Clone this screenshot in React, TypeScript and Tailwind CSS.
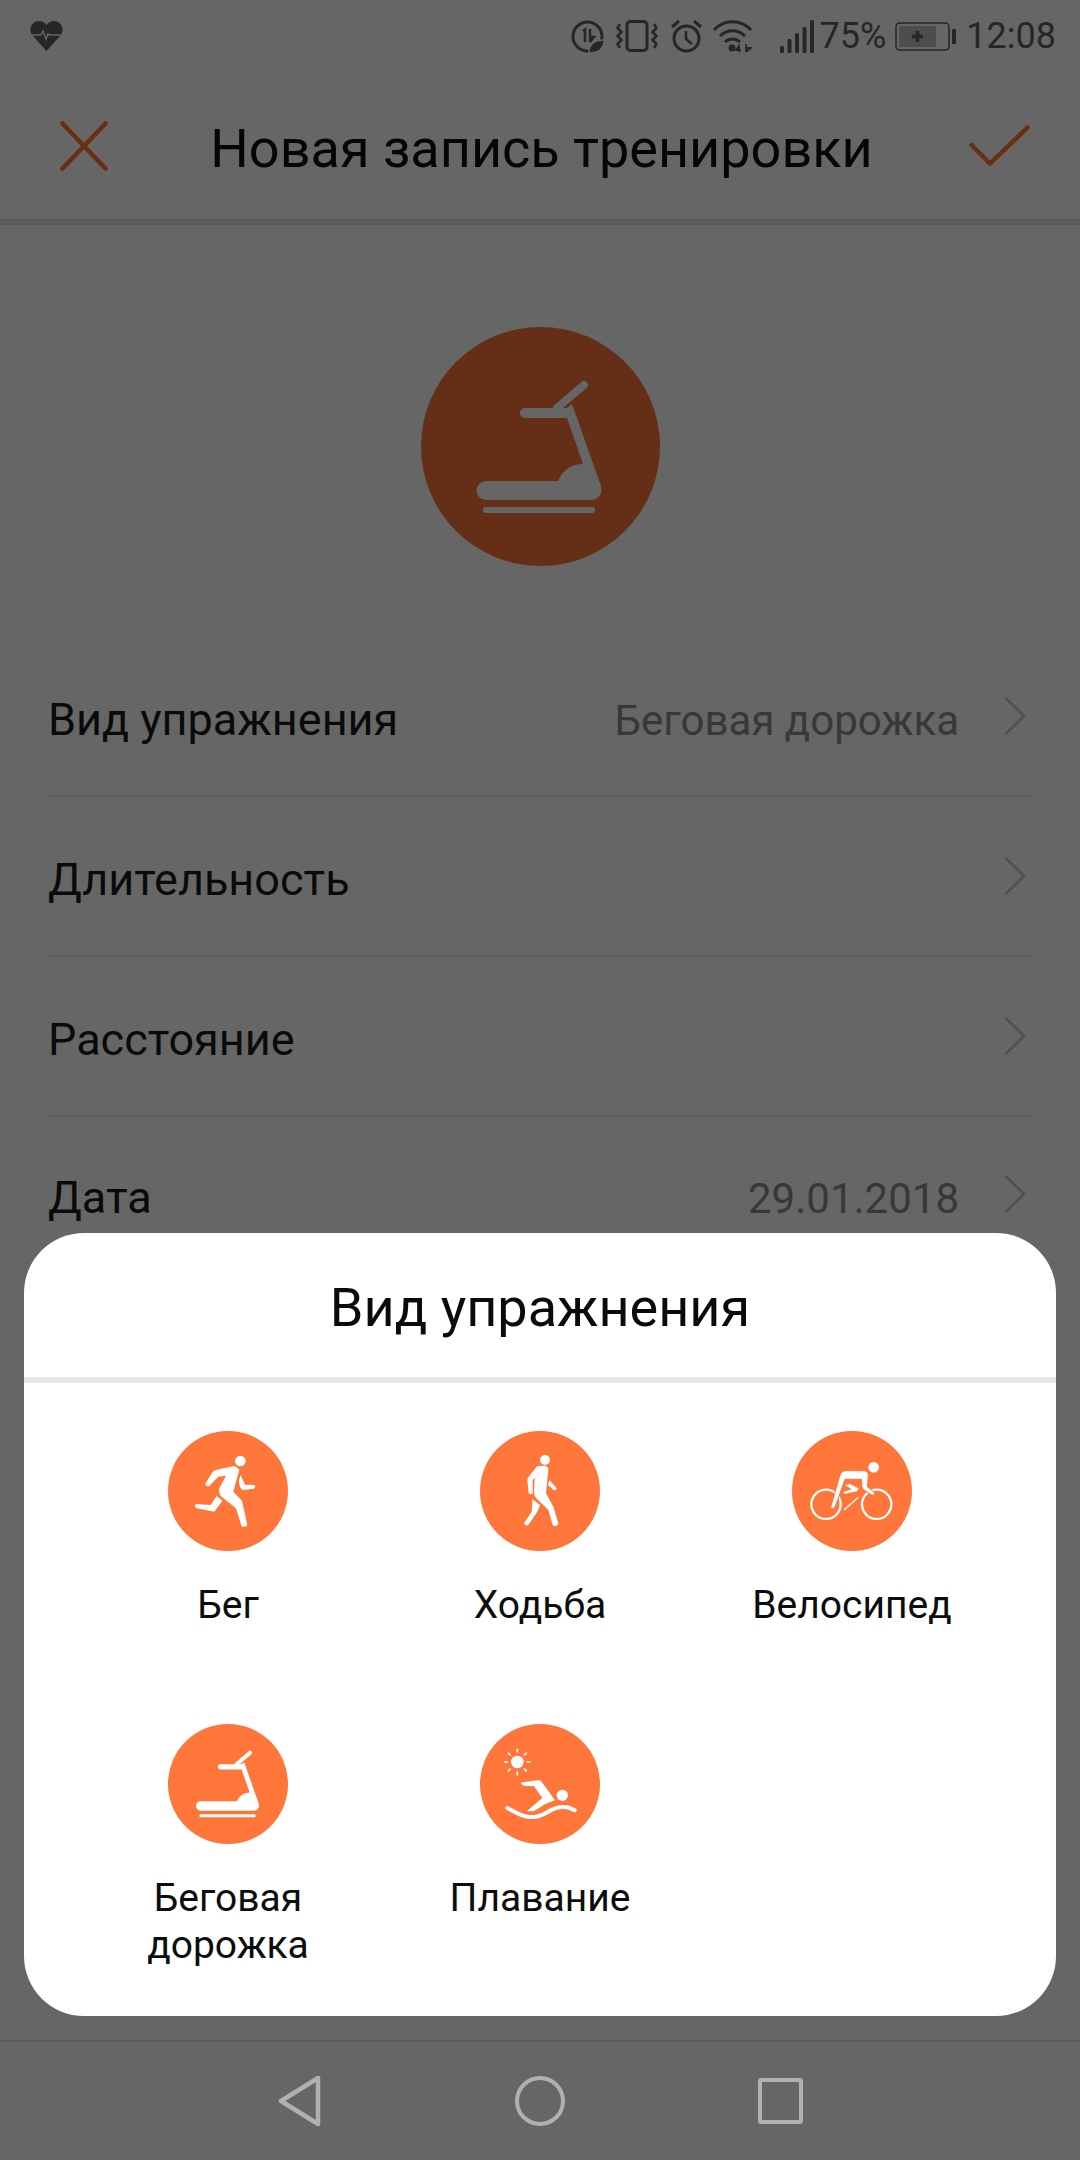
import React from "react";

const ORANGE = "#fe763a";

function Treadmill({ fill, size }: { fill: string; size: number }) {
  return (
    <svg width={size} height={size} viewBox="0 0 238 238">
      <path d="M104 85H146" stroke={fill} strokeWidth="10" strokeLinecap="round" fill="none" />
      <path d="M136 80L163 57" stroke={fill} strokeWidth="8" strokeLinecap="round" fill="none" />
      <path
        d="M146 90L162 136C150 136 141 143 137 153L65 153A9.5 9.5 0 0 0 65 172L170 172C178 172 182 165 180 158L151 76L143 82Z"
        fill={fill}
      />
      <path d="M65 182H171" stroke={fill} strokeWidth="6" strokeLinecap="round" fill="none" />
    </svg>
  );
}

function Runner() {
  return (
    <svg width="120" height="120" viewBox="54 63 360 360" fill="#fff">
      <circle cx="271" cy="153" r="16" />
      <path d="M165 222L188 186Q192 180 200 179L250 169Q262 170 268 180L262 200L250 245L276 272L292 345Q290 352 280 350L275 350L258 295L212 258Q205 248 208 235L228 197L205 200L178 228Q168 230 165 222Z" />
      <path d="M200 258L217 272L195 303Q190 306 185 304L140 295Q132 290 137 282L182 285Z" />
      <path d="M272 195L285 224L314 225Q318 232 312 236L280 240Q272 238 270 230L266 215Z" />
    </svg>
  );
}

function Walker() {
  return (
    <svg width="120" height="120" viewBox="60 63 360 360" fill="#fff">
      <circle cx="255" cy="150" r="15" />
      <path d="M232 168L256 167Q265 170 265 180L258 250L280 290L295 340Q293 350 283 348L278 345L265 300L232 268Q222 258 222 245L224 205L238 190L218 210L218 250Q212 256 206 250L202 210Q202 204 206 200Z" />
      <path d="M218 268L240 285L232 305L205 345Q197 350 192 340L215 305Z" />
      <path d="M268 210L290 235Q288 243 282 241L264 225Z" />
    </svg>
  );
}

function Bike() {
  return (
    <svg width="120" height="120" viewBox="996 63 360 360" fill="#fff">
      <circle cx="1241" cy="172" r="16" />
      <circle cx="1098" cy="283" r="44" fill="none" stroke="#fff" strokeWidth="7" />
      <circle cx="1250" cy="283" r="44" fill="none" stroke="#fff" strokeWidth="7" />
      <path d="M1140 195Q1145 182 1160 182L1215 182Q1225 185 1225 195L1222 230L1245 248Q1243 258 1235 255L1212 240Q1205 235 1205 225L1205 208L1155 208L1125 292Q1118 300 1112 292Z" stroke={ORANGE} strokeWidth="3" />
      <path d="M1155 225L1170 222L1195 235Q1193 248 1183 245L1155 252L1150 246L1175 238Z" />
      <path d="M1152 300L1195 262" stroke="#fff" strokeWidth="4" />
    </svg>
  );
}

function Swimmer() {
  const rays = [0, 45, 90, 135, 180, 225, 270, 315];
  return (
    <svg width="120" height="120" viewBox="988 43 360 360" fill="#fff">
      <circle cx="1100" cy="157" r="19" />
      {rays.map((a) => (
        <path
          key={a}
          d="M1100 127V119"
          stroke="#fff"
          strokeWidth="5"
          strokeLinecap="round"
          transform={`rotate(${a} 1100 157)`}
        />
      ))}
      <circle cx="1235" cy="257" r="17" />
      <path d="M1112 222Q1108 218 1116 218L1160 212Q1168 211 1173 216L1213 272Q1195 278 1180 285L1150 305L1128 305L1175 265L1150 230L1118 228Z" />
      <path
        d="M1070 295C1100 310 1120 325 1150 322C1190 318 1200 290 1240 292C1255 292 1265 298 1272 302"
        fill="none"
        stroke="#fff"
        strokeWidth="12"
        strokeLinecap="round"
      />
    </svg>
  );
}

function Chevron() {
  return (
    <svg width="22" height="38" viewBox="0 0 22 38" fill="none" className="mr-[5px] ml-[45px]">
      <path d="M1.500 1L20 19L1.500 37" stroke="#505050" strokeWidth="2.500" />
    </svg>
  );
}

function Row({ label, value }: { label: string; value?: string }) {
  return (
    <div className="flex h-[160px] items-center border-b-2 border-[#5e5e5e] last:h-[154px] last:border-b-0">
      <span className="-ml-px flex-1 pt-[8px] text-[45px] text-[#0a0a0a]">{label}</span>
      {value && <span className="pt-[8px] text-[42px] text-[#383838]">{value}</span>}
      <Chevron />
    </div>
  );
}

function Choice({ label, children }: { label: string; children: React.ReactNode }) {
  return (
    <div className="flex h-[293px] flex-col items-center">
      <div className="flex h-[120px] w-[120px] items-center justify-center rounded-full bg-[#fe763a]">{children}</div>
      <div className="mt-[31px] w-[230px] text-center text-[39px] leading-[47px] whitespace-pre-line text-[#0d0d0d]">{label}</div>
    </div>
  );
}

export default function App() {
  return (
    <div
      className="relative flex h-[2160px] w-[1080px] flex-col overflow-hidden bg-[#666666]"
      style={{ fontFamily: "Roboto, 'Noto Sans', sans-serif" }}
    >
      {/* status bar */}
      <div className="flex h-[72px] items-center pr-[24px] pl-[30px] text-[#262626]">
        <svg width="33" height="30" viewBox="0 0 33 30">
          <path d="M16.5 30L2 14C-2 8 2 0 9 0C12.500 0 15 2 16.500 4C18 2 20.500 0 24 0C31 0 35 8 31 14Z" fill="#262626" />
          <path d="M1 14H11L13 10L16 18L18 13L19.500 14H32" stroke="#666" strokeWidth="1.500" fill="none" />
        </svg>
        <div className="flex-1" />
        <svg width="33" height="33" viewBox="0 0 33 33" fill="none">
          <circle cx="16.500" cy="16.500" r="14.500" stroke="#262626" strokeWidth="3" />
          <path d="M12 11L14 9.500V22M19 9V22M19 22L23 17H19" stroke="#262626" strokeWidth="2.500" />
          <path d="M18 33C18 24 24 20 33 20C33 28 28 33 18 33Z" fill="#262626" stroke="#666" strokeWidth="1.500" />
        </svg>
        <svg width="42" height="32" viewBox="0 0 42 32" fill="none" className="ml-[12px]">
          <rect x="11" y="1.500" width="20" height="29" rx="3.500" stroke="#262626" strokeWidth="3" />
          <path d="M4 4L1.500 8L5.500 12L1.500 16L5.500 20L1.500 24L4 28M38 4L40.500 8L36.500 12L40.500 16L36.500 20L40.500 24L38 28" stroke="#262626" strokeWidth="2.500" />
        </svg>
        <svg width="33" height="33" viewBox="0 0 33 33" fill="none" className="ml-[12px]">
          <circle cx="16.500" cy="18.500" r="12.500" stroke="#262626" strokeWidth="3" />
          <path d="M16 11V19L22 24" stroke="#262626" strokeWidth="2.500" />
          <path d="M2 7L9 1M31 7L24 1" stroke="#262626" strokeWidth="3" />
        </svg>
        <svg width="39" height="32" viewBox="0 0 39 32" fill="none" className="ml-[10px]">
          <path d="M1 10C11 -1 28 -1 38 10M7 16C14 9 25 9 32 16M12 22C16 18 23 18 27 22" stroke="#262626" strokeWidth="3" />
          <circle cx="19" cy="28" r="3.500" fill="#262626" />
          <path d="M26 32V26L23 30H28M33 24V32L38 28H33" stroke="#262626" strokeWidth="1.800" />
        </svg>
        <svg width="34" height="33" viewBox="0 0 34 33" fill="#262626" className="ml-[28px]">
          <rect x="0" y="26" width="4" height="7" rx="1.500" />
          <rect x="7.500" y="19" width="4" height="14" rx="1.500" />
          <rect x="15" y="13" width="4" height="20" rx="1.500" />
          <rect x="22.500" y="7" width="4" height="26" rx="1.500" />
          <rect x="30" y="0" width="4" height="33" rx="1.500" />
        </svg>
        <span className="ml-[6px] text-[36px]">75%</span>
        <svg width="61" height="29" viewBox="0 0 61 29" className="ml-[9px]">
          <rect x="1" y="1" width="53" height="27" rx="3.500" fill="none" stroke="#262626" strokeWidth="1.500" />
          <rect x="4" y="4" width="37" height="21" fill="#4d4d4d" />
          <rect x="57" y="7" width="4" height="15" rx="1" fill="#262626" />
          <path d="M22.500 9V20M17 14.500H28" stroke="#262626" strokeWidth="3.500" />
        </svg>
        <span className="ml-[10px] text-[36px]">12:08</span>
      </div>

      {/* header */}
      <div className="flex h-[153px] items-center justify-between border-b-[6px] border-[#5b5b5b] pr-[50px] pl-[60px]">
        <svg width="48" height="50" viewBox="0 0 48 50" fill="none">
          <path d="M2.500 2.500L45.500 47.500M45.500 2.500L2.500 47.500" stroke="#692f12" strokeWidth="4.500" strokeLinecap="round" />
        </svg>
        <span className="ml-[6px] pt-[6px] text-[54px] text-[#050505]">Новая запись тренировки</span>
        <svg width="61" height="42" viewBox="0 0 61 42" fill="none">
          <path d="M2.500 20L21 38.500L58.500 2.500" stroke="#692f12" strokeWidth="4.500" strokeLinecap="round" strokeLinejoin="round" />
        </svg>
      </div>

      {/* hero */}
      <div className="flex justify-center pt-[102px] pb-[71px]">
        <div className="flex h-[239px] w-[239px] items-center justify-center rounded-full bg-[#642f16]">
          <Treadmill fill="#666666" size={238} />
        </div>
      </div>

      {/* list */}
      <div className="mx-[49px] flex flex-col">
        <Row label="Вид упражнения" value="Беговая дорожка" />
        <Row label="Длительность" />
        <Row label="Расстояние" />
        <Row label="Дата" value="29.01.2018" />
      </div>

      <div className="flex-1" />

      {/* nav bar */}
      <div className="flex h-[120px] items-center justify-center border-t-2 border-[#5a5a5a]">
        <div className="flex w-[240px] justify-center">
          <svg width="46" height="52" viewBox="0 0 46 52" fill="none">
            <path d="M41 3L4 26L41 49Z" stroke="#b0b0b0" strokeWidth="4.500" strokeLinejoin="round" />
          </svg>
        </div>
        <div className="flex w-[240px] justify-center">
          <div className="h-[50px] w-[50px] rounded-full border-[4px] border-[#b0b0b0]" />
        </div>
        <div className="flex w-[240px] justify-center">
          <div className="h-[46px] w-[45px] rounded-[3px] border-[4px] border-[#b0b0b0]" />
        </div>
      </div>

      {/* bottom sheet */}
      <div className="absolute top-[1233px] left-[24px] h-[783px] w-[1032px] rounded-[60px] bg-white">
        <div className="flex h-[150px] items-center justify-center border-b-[6px] border-[#e6e6e6] pt-[5px] text-[54px] text-[#0a0a0a]">
          Вид упражнения
        </div>
        <div className="mx-[48px] grid grid-cols-3 pt-[48px]">
          <Choice label="Бег"><Runner /></Choice>
          <Choice label="Ходьба"><Walker /></Choice>
          <Choice label="Велосипед"><Bike /></Choice>
          <Choice label={"Беговая\nдорожка"}><Treadmill fill="#ffffff" size={120} /></Choice>
          <Choice label="Плавание"><Swimmer /></Choice>
        </div>
      </div>
    </div>
  );
}
